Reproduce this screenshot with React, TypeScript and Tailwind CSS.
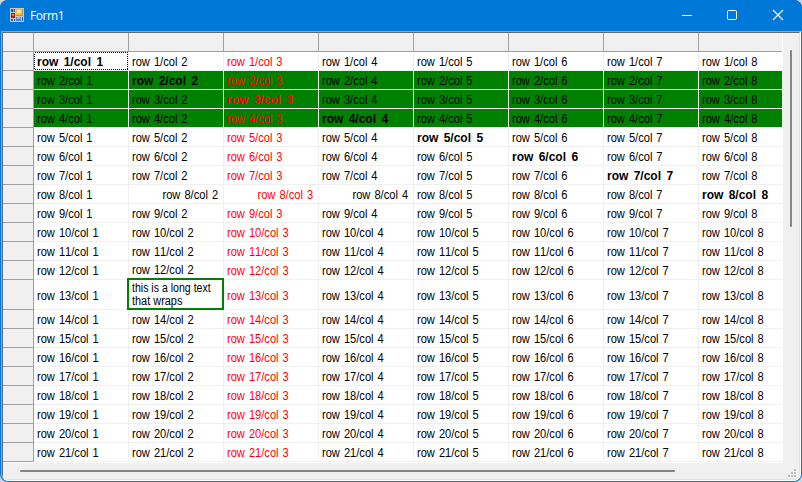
const ROWS = Array.from({ length: 21 }, (_, i) => i + 1);
const COLS = [1, 2, 3, 4, 5, 6, 7, 8];

function FormIcon() {
  return (
    <svg width="14" height="14" viewBox="0 0 14 14" shapeRendering="crispEdges">
      <rect width="14" height="14" fill="#c9c8c4" />
      <rect x="1" y="1" width="4" height="3" fill="#1d62b8" />
      <rect x="3" y="1" width="1" height="3" fill="#7fa3cf" />
      <rect x="6" y="1" width="7" height="7" fill="#a8946a" />
      <rect x="6" y="1" width="6" height="6" fill="#f3c02c" />
      <rect x="7" y="2" width="4" height="3" fill="#fde48c" />
      <rect x="1" y="5" width="4" height="5" fill="#a32414" />
      <rect x="2" y="6" width="2" height="2" fill="#dc7462" />
      <rect x="1" y="11" width="2" height="2" fill="#1d62b8" />
      <rect x="4" y="11" width="1" height="2" fill="#1d62b8" />
      <rect x="6" y="9" width="5" height="4" fill="#4a84e0" />
      <rect x="7" y="9" width="3" height="2" fill="#8fb6f2" />
      <rect x="12" y="9" width="1" height="4" fill="#1d62b8" />
    </svg>
  );
}

function TitleBar() {
  return (
    <div className="flex h-[31px] shrink-0 items-start bg-[#0078d7] pl-2.5 pt-2 text-white">
      <FormIcon />
      <span className="ml-1.5 font-['Open_Sans','Noto_Sans',sans-serif] text-[12px] leading-4 tracking-[-0.4px]">Form1</span>
      <svg className="ml-auto mr-[14px]" width="106" height="14" viewBox="0 0 106 14" fill="none" stroke="white">
        <path d="M0 7.5h10" />
        <rect x="45.5" y="2.5" width="9" height="9" rx="1" />
        <path d="M91 2l10 10M101 2l-10 10" strokeWidth="1.1" />
      </svg>
    </div>
  );
}

function Cell({ row, col }: { row: number; col: number }) {
  const green = row >= 2 && row <= 4;
  const bold = row === col;
  const right = row === 8 && col >= 2 && col <= 4;
  const wrapped = row === 13 && col === 2;
  const first = row === 1 && col === 1;
  const raised = row === 12 && col === 2;
  const nudge = raised ? "-mt-px" : row === 13 ? "mt-[3px]" : "mt-px";
  if (wrapped) {
    return (
      <div className="relative w-[95px] shrink-0">
        <div className="absolute -left-[2px] -top-[2px] h-8 w-[97px] border-2 border-[#008000] bg-white pl-[3px] pt-[2px] leading-[13px] whitespace-nowrap">
          <span className="block origin-left scale-x-[0.88]">this is a long text</span>
          <span className="block origin-left scale-x-[0.91]">that wraps</span>
        </div>
      </div>
    );
  }
  return (
    <div className={`relative flex w-[95px] shrink-0 items-center border-r border-b border-[#f0f0f0] ${green ? "bg-[#008000]" : "bg-white"} ${right ? "justify-end pr-[5px]" : "pl-[3px]"} ${col === 3 ? "text-[#ff0000]" : "text-black"}`}>
      <span className={`block leading-[14px] whitespace-nowrap ${right ? "origin-right" : "origin-left"} ${bold ? "font-bold [word-spacing:2px]" : "scale-x-[0.925] [word-spacing:1px]"} ${nudge}`}>
        row {row}/col {col}
      </span>
      {first && (
        <svg className="absolute left-0 top-0" width="94" height="18">
          <rect x="0.5" y="0.5" width="93" height="17" fill="none" stroke="black" strokeDasharray="1 1" shapeRendering="crispEdges" />
        </svg>
      )}
    </div>
  );
}

function DataGrid() {
  return (
    <div className="h-[430px] w-[779px] shrink-0 overflow-hidden border-b border-white bg-[#f0f0f0] font-['Liberation_Sans',Arial,sans-serif] text-[12px] [font-kerning:none]">
      <div className="flex h-[19px] w-[791px]">
        <div className="w-[31px] shrink-0 border-r border-b border-[#a0a0a0]" />
        {COLS.map((c) => (
          <div key={c} className="w-[95px] shrink-0 border-r border-b border-[#a0a0a0]" />
        ))}
      </div>
      {ROWS.map((r) => (
        <div key={r} className={`flex w-[791px] ${r === 13 ? "h-[30px]" : "h-[19px]"}`}>
          <div className="w-[31px] shrink-0 border-r border-b border-[#a0a0a0]" />
          {COLS.map((c) => (
            <Cell key={c} row={r} col={c} />
          ))}
        </div>
      ))}
    </div>
  );
}

function SizeGrip() {
  return (
    <svg width="8" height="8" viewBox="0 0 8 8" fill="#bfbfbf" shapeRendering="crispEdges">
      <path d="M6 0h2v2h-2zM3 3h2v2h-2zM6 3h2v2h-2zM0 6h2v2h-2zM3 6h2v2h-2zM6 6h2v2h-2z" />
    </svg>
  );
}

export default function App() {
  return (
    <div className="h-[482px] w-[802px] bg-[#cdd3e6]">
      <div className="flex h-full flex-col overflow-hidden rounded-lg bg-[#0078d7]">
        <TitleBar />
        <div className="mx-px mb-px flex min-h-0 flex-1 flex-col overflow-hidden rounded-b-[7px] border border-t-[#a0a0a0] border-r-white border-b-white border-l-[#a0a0a0] bg-[#f0f0f0]">
          <div className="flex min-h-0 flex-1 flex-col border border-t-[#696969] border-r-[#e3e3e3] border-b-[#e3e3e3] border-l-[#696969] pr-[3px]">
            <div className="flex">
              <DataGrid />
              <div className="flex flex-1 border-l border-white pl-[7px] pt-[17px]">
                <div className="h-[177px] w-[2px] rounded-full bg-[#858585]" />
              </div>
            </div>
            <div className="flex h-[14px] items-end justify-between pl-[17px]">
              <div className="mb-[5px] h-[2px] w-[655px] rounded-full bg-[#858585]" />
              <SizeGrip />
            </div>
          </div>
        </div>
      </div>
    </div>
  );
}
